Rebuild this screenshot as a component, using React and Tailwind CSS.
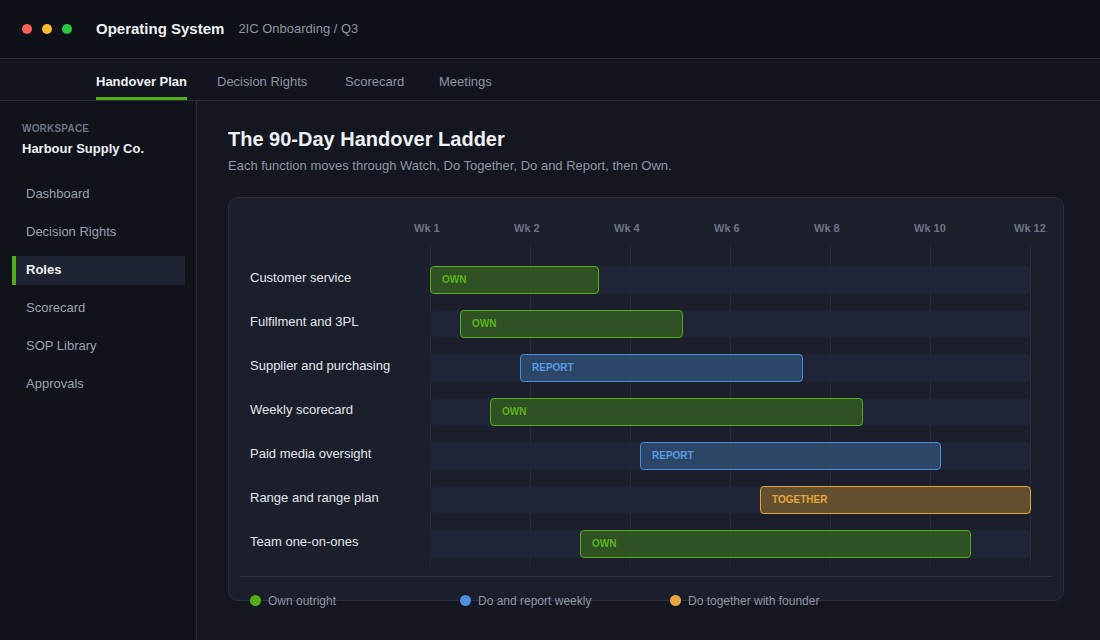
import React from 'react';

const tabs = [
  { label: 'Handover Plan', w: 'w-[121px]', active: true },
  { label: 'Decision Rights', w: 'w-[128px]' },
  { label: 'Scorecard', w: 'w-[94px]' },
  { label: 'Meetings', w: 'w-[100px]' },
];

const nav = ['Dashboard', 'Decision Rights', 'Roles', 'Scorecard', 'SOP Library', 'Approvals'];

const weeks = ['Wk 1', 'Wk 2', 'Wk 4', 'Wk 6', 'Wk 8', 'Wk 10', 'Wk 12'];

const styles = {
  own: 'bg-[#2f5123] border-[#52ad18] text-[#5cb31e]',
  report: 'bg-[#2b4667] border-[#4a8fdb] text-[#5a9be2]',
  together: 'bg-[#624f2f] border-[#e3a33b] text-[#e8a53e]',
};

const rows = [
  { name: 'Customer service', kind: 'own', label: 'OWN', start: 0, end: 28 },
  { name: 'Fulfilment and 3PL', kind: 'own', label: 'OWN', start: 5, end: 42 },
  { name: 'Supplier and purchasing', kind: 'report', label: 'REPORT', start: 15, end: 62 },
  { name: 'Weekly scorecard', kind: 'own', label: 'OWN', start: 10, end: 72 },
  { name: 'Paid media oversight', kind: 'report', label: 'REPORT', start: 35, end: 85 },
  { name: 'Range and range plan', kind: 'together', label: 'TOGETHER', start: 55, end: 100 },
  { name: 'Team one-on-ones', kind: 'own', label: 'OWN', start: 25, end: 90 },
];

const legend = [
  { color: 'bg-[#52ad18]', text: 'Own outright' },
  { color: 'bg-[#4a90dc]', text: 'Do and report weekly' },
  { color: 'bg-[#e6a53e]', text: 'Do together with founder' },
];

const gridX = ['left-[201px]', 'left-[301px]', 'left-[401px]', 'left-[501px]', 'left-[601px]', 'left-[701px]', 'left-[801px]'];

export default function App() {
  return (
    <div className="w-full h-[640px] flex flex-col bg-[#141720] overflow-hidden" style={{ fontFamily: '"Liberation Sans", Arial, sans-serif' }}>
      <header className="h-[59px] shrink-0 flex items-center px-[22px] bg-[#0e1118] border-b border-[#2a2f3b]">
        <div className="flex gap-[10px]">
          <span className="w-[10px] h-[10px] rounded-full bg-[#ff5f57]" />
          <span className="w-[10px] h-[10px] rounded-full bg-[#febc2e]" />
          <span className="w-[10px] h-[10px] rounded-full bg-[#28c840]" />
        </div>
        <div className="ml-[24px] text-[15px] font-bold text-[#eef0f4]">Operating System</div>
        <div className="ml-[14px] text-[13px] text-[#8d94a3]">2IC Onboarding / Q3</div>
      </header>

      <nav className="h-[42px] shrink-0 flex pl-[96px] bg-[#12151d] border-b border-[#2a2f3b]">
        {tabs.map(t => (
          <div key={t.label} className={`${t.w} h-full`}>
            <div className={`inline-flex h-full items-center pt-[7px] text-[13px] border-b-[3px] ${
              t.active ? 'border-[#52ad18] text-[#eef0f4] font-bold' : 'border-transparent text-[#8d94a3]'
            }`}>
              {t.label}
            </div>
          </div>
        ))}
      </nav>

      <div className="flex flex-1 min-h-0">
        <aside className="w-[197px] shrink-0 bg-[#10131a] border-r border-[#2a2f3b] pt-[20px]">
          <div className="pl-[22px] text-[10px] font-bold tracking-[0.2px] text-[#6b7282]">WORKSPACE</div>
          <div className="pl-[22px] mt-[3px] text-[13px] font-bold text-[#eef0f4]">Harbour Supply Co.</div>
          <div className="mt-[21px] flex flex-col gap-[9px]">
            {nav.map(n => (
              <div key={n} className={`mx-[12px] w-[173px] h-[29px] flex items-center text-[13px] ${
                n === 'Roles' ? 'bg-[#1e2433] border-l-4 border-[#52ad18] pl-[10px] font-bold text-[#eef0f4]' : 'pl-[14px] text-[#9aa1ae]'
              }`}>
                {n}
              </div>
            ))}
          </div>
        </aside>

        <main className="flex-1 pl-[31px] pt-[24px]">
          <h1 className="text-[20px] leading-[28px] font-bold text-[#eef0f4]">The 90-Day Handover Ladder</h1>
          <p className="mt-[3px] text-[13px] text-[#8d94a3]">Each function moves through Watch, Do Together, Do and Report, then Own.</p>

          <div className="mt-[21px] w-[836px] h-[404px] rounded-[10px] border border-[#2a3040] bg-[#1b1f2b]">
            <div className="mt-[22px] h-[16px] flex ml-[185px] text-[11px] font-bold leading-[16px] text-[#6c7386]">
              {weeks.map(w => (
                <div key={w} className="w-[100px] shrink-0">{w}</div>
              ))}
            </div>

            <div className="relative mt-[10px] h-[321px] pt-[12px]">
              {gridX.map(x => (
                <div key={x} className={`absolute top-0 bottom-0 w-px bg-[#262c3a] ${x}`} />
              ))}
              {rows.map(r => (
                <div key={r.name} className="relative h-[44px] flex items-center">
                  <div className="w-[201px] pl-[21px] pb-[4px] text-[13px] text-[#e1e4eb]">{r.name}</div>
                  <div className="relative w-[600px] h-[28px] rounded-[4px] bg-[#1f2536]">
                    <div
                      className={`absolute top-0 h-[28px] rounded-[4px] border flex items-center pl-[11px] text-[10px] font-bold ${styles[r.kind]}`}
                      style={{ left: `${r.start}%`, width: `calc(${r.end - r.start}% + 1px)` }}
                    >
                      {r.label}
                    </div>
                  </div>
                </div>
              ))}
            </div>

            <div className="mt-[9px] mx-[11px] h-px bg-[#2c3242]" />

            <div className="mt-[16px] flex pl-[21px] text-[12px] leading-[16px] text-[#8d94a3]">
              {legend.map(l => (
                <div key={l.text} className="w-[210px] flex items-center gap-[7px]">
                  <span className={`w-[11px] h-[11px] rounded-full ${l.color}`} />
                  {l.text}
                </div>
              ))}
            </div>
          </div>
        </main>
      </div>
    </div>
  );
}
